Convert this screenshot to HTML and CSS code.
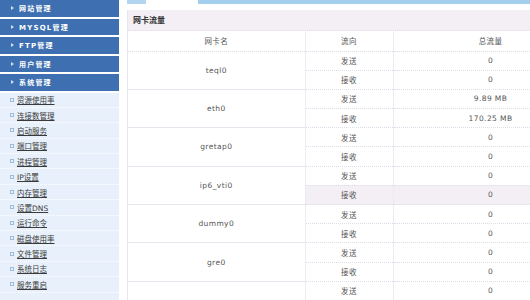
FILE: index.html
```html
<!DOCTYPE html>
<html lang="zh">
<head>
<meta charset="utf-8">
<title>网卡流量</title>
<link rel="stylesheet" href="styles.css">
</head>
<body>
<div class="page">
  <aside class="sidebar">
    <div class="menu-head"><span class="arrow"></span>网站管理</div>
    <div class="menu-head"><span class="arrow"></span>MYSQL管理</div>
    <div class="menu-head"><span class="arrow"></span>FTP管理</div>
    <div class="menu-head"><span class="arrow"></span>用户管理</div>
    <div class="menu-head"><span class="arrow"></span>系统管理</div>
    <ul class="menu-items">
      <li><span class="bullet"></span><a href="#">资源使用率</a></li>
      <li><span class="bullet"></span><a href="#">连接数管理</a></li>
      <li><span class="bullet"></span><a href="#">启动服务</a></li>
      <li><span class="bullet"></span><a href="#">端口管理</a></li>
      <li><span class="bullet"></span><a href="#">进程管理</a></li>
      <li><span class="bullet"></span><a href="#">IP设置</a></li>
      <li><span class="bullet"></span><a href="#">内存管理</a></li>
      <li><span class="bullet"></span><a href="#">设置DNS</a></li>
      <li><span class="bullet"></span><a href="#">运行命令</a></li>
      <li><span class="bullet"></span><a href="#">磁盘使用率</a></li>
      <li><span class="bullet"></span><a href="#">文件管理</a></li>
      <li><span class="bullet"></span><a href="#">系统日志</a></li>
      <li><span class="bullet"></span><a href="#">服务重启</a></li>
    </ul>
  </aside>
  <main class="content">
    <div class="tabbar">
      <span class="tab-side"></span>
      <span class="tab-active"></span>
      <span class="tab-rest"></span>
    </div>
    <section class="panel">
      <div class="panel-title">网卡流量</div>
      <table class="traffic">
        <colgroup>
          <col class="c-name">
          <col class="c-dir">
          <col class="c-total">
        </colgroup>
        <thead>
          <tr class="head"><th>网卡名</th><th>流向</th><th>总流量</th></tr>
        </thead>
        <tbody>
          <tr class="sub"><td class="name" rowspan="2">teql0</td><td>发送</td><td>0</td></tr>
          <tr class="sub"><td>接收</td><td>0</td></tr>
          <tr class="sub"><td class="name" rowspan="2">eth0</td><td>发送</td><td>9.89 MB</td></tr>
          <tr class="sub"><td>接收</td><td>170.25 MB</td></tr>
          <tr class="sub"><td class="name" rowspan="2">gretap0</td><td>发送</td><td>0</td></tr>
          <tr class="sub"><td>接收</td><td>0</td></tr>
          <tr class="sub"><td class="name" rowspan="2">ip6_vti0</td><td>发送</td><td>0</td></tr>
          <tr class="sub hl"><td>接收</td><td>0</td></tr>
          <tr class="sub"><td class="name" rowspan="2">dummy0</td><td>发送</td><td>0</td></tr>
          <tr class="sub"><td>接收</td><td>0</td></tr>
          <tr class="sub"><td class="name" rowspan="2">gre0</td><td>发送</td><td>0</td></tr>
          <tr class="sub"><td>接收</td><td>0</td></tr>
          <tr class="sub"><td class="name"></td><td>发送</td><td>0</td></tr>
        </tbody>
      </table>
    </section>
  </main>
</div>
</body>
</html>
```

FILE: styles.css
```css
html, body {
  margin: 0;
  padding: 0;
  background: #ffffff;
  overflow: hidden;
}

body {
  font-family: "DejaVu Sans", "Noto Sans CJK SC", sans-serif;
  color: #555555;
}

.page {
  display: flex;
  align-items: flex-start;
  width: 530px;
  height: 300px;
  overflow: hidden;
}

/* ---------- sidebar ---------- */
.sidebar {
  flex: 0 0 119px;
  width: 119px;
}

.menu-head {
  display: flex;
  align-items: center;
  height: 16.5px;
  margin-bottom: 2px;
  padding-left: 11px;
  background: #3e6fb0;
  color: #ffffff;
  font-weight: bold;
  font-size: 7px;
  letter-spacing: 1.2px;
  box-sizing: border-box;
}

.arrow {
  width: 0;
  height: 0;
  border-left: 3px solid #cfe0f5;
  border-top: 2px solid transparent;
  border-bottom: 2px solid transparent;
  margin-right: 5px;
}

.menu-items {
  list-style: none;
  margin: 0;
  padding: 0 0 12px 0;
  background: #e8f1fb;
}

.menu-items li {
  display: flex;
  align-items: center;
  height: 15.4px;
  padding-left: 10px;
  border-bottom: 1px dotted #ffffff;
  box-sizing: border-box;
  font-size: 7.5px;
}

.bullet {
  width: 2px;
  height: 2px;
  border: 1px solid #9dbcdc;
  margin-right: 3px;
  flex: 0 0 auto;
}

.menu-items a {
  color: #3a3a3a;
  text-decoration: underline;
  text-underline-offset: 1px;
}

/* ---------- content ---------- */
.content {
  flex: 1 1 auto;
  padding-left: 8px;
  min-width: 0;
}

.tabbar {
  display: flex;
  height: 4px;
}

.tab-side {
  flex: 0 0 19px;
  background: #b4d5ef;
}

.tab-active {
  flex: 0 0 52px;
  background: #ffffff;
}

.tab-rest {
  flex: 1 1 auto;
  background: #a2cfee;
}

.panel {
  margin-top: 6px;
  width: 470px;
  border-left: 1px solid #e6e6ee;
}

.panel-title {
  height: 21px;
  line-height: 22px;
  padding-left: 5px;
  background: #f4eff5;
  color: #333333;
  font-weight: bold;
  font-size: 8px;
  border-bottom: 1px dotted #e2dce6;
  box-sizing: border-box;
}

.traffic {
  width: 460px;
  table-layout: fixed;
  border-collapse: collapse;
  font-size: 7.5px;
  letter-spacing: 0.4px;
  color: #555555;
}

.c-name { width: 177px; }
.c-dir { width: 88px; }
.c-total { width: 195px; }

.traffic th,
.traffic td {
  padding: 0;
  text-align: center;
  font-weight: normal;
  border-bottom: 1px dotted #dcdde9;
  border-right: 1px solid #ebebf3;
}

.traffic tr.head {
  height: 20px;
}

.traffic tr.sub {
  height: 19.2px;
}

.traffic td.name {
  border-bottom: 1px solid #e6e6ef;
}

.traffic tr.hl td {
  background: #f4eff4;
}
```
